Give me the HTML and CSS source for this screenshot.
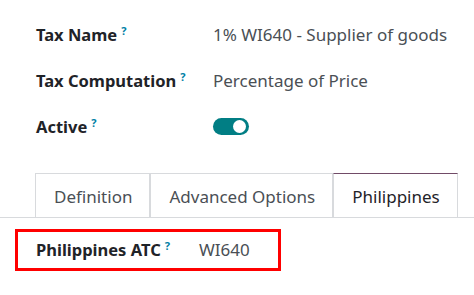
FILE: index.html
```html
<!DOCTYPE html>
<html lang="en">
<head>
  <meta charset="UTF-8">
  <title>Tax</title>
  <link rel="stylesheet" href="styles.css">
</head>
<body>
  <div class="fields">
    <div class="field">
      <div class="label">Tax Name<sup>?</sup></div>
      <div class="value">1% WI640 - Supplier of goods</div>
    </div>
    <div class="field">
      <div class="label">Tax Computation<sup>?</sup></div>
      <div class="value">Percentage of Price</div>
    </div>
    <div class="field">
      <div class="label">Active<sup>?</sup></div>
      <div class="value"><span class="toggle"><span class="knob"></span></span></div>
    </div>
  </div>
  <div class="tabs">
    <div class="tab">Definition</div>
    <div class="tab">Advanced Options</div>
    <div class="tab active">Philippines</div>
  </div>
  <div class="highlight">
    <div class="label">Philippines ATC<sup>?</sup></div>
    <div class="value">WI640</div>
  </div>
</body>
</html>
```

FILE: styles.css
```css
body {
  margin: 0;
  background: #fff;
  font-family: 'Noto Sans', sans-serif;
  font-size: 17px;
  line-height: 24px;
  color: #212529;
}
.fields {
  padding: 23px 0 0 36px;
}
.field {
  display: grid;
  grid-template-columns: 177px auto;
  height: 46px;
  align-items: start;
}
.label {
  font-weight: bold;
  font-size: 16.5px;
  color: #1f2328;
}
.label sup {
  color: #0180a5;
  font-size: 11px;
  font-weight: bold;
  margin-left: 4px;
  vertical-align: 6px;
  line-height: 0;
}
.value {
  color: #4a4f55;
}
.toggle {
  display: inline-block;
  width: 36px;
  height: 17px;
  margin-top: 3px;
  border-radius: 9px;
  background: #017e84;
  position: relative;
}
.knob {
  position: absolute;
  right: 3px;
  top: 2px;
  width: 13px;
  height: 13px;
  border-radius: 50%;
  background: #fff;
}
.tabs {
  display: flex;
  margin-top: 12px;
  padding-left: 35px;
  border-bottom: 1px solid #d8dadd;
}
.tab {
  padding: 11px 17px 8px 18px;
  height: 24px;
  border: 1px solid #d8dadd;
  border-bottom: none;
  color: #4a4f55;
}
.tab.active {
  color: #1f2328;
  border-top: 1px solid #714b67;
}
.highlight {
  display: flex;
  align-items: center;
  width: 242px;
  height: 36px;
  margin: 11px 0 0 15px;
  padding: 0 0 0 18px;
  border: 3px solid #f00;
  box-sizing: content-box;
}
.highlight .label {
  width: 163px;
  flex: none;
}
```
